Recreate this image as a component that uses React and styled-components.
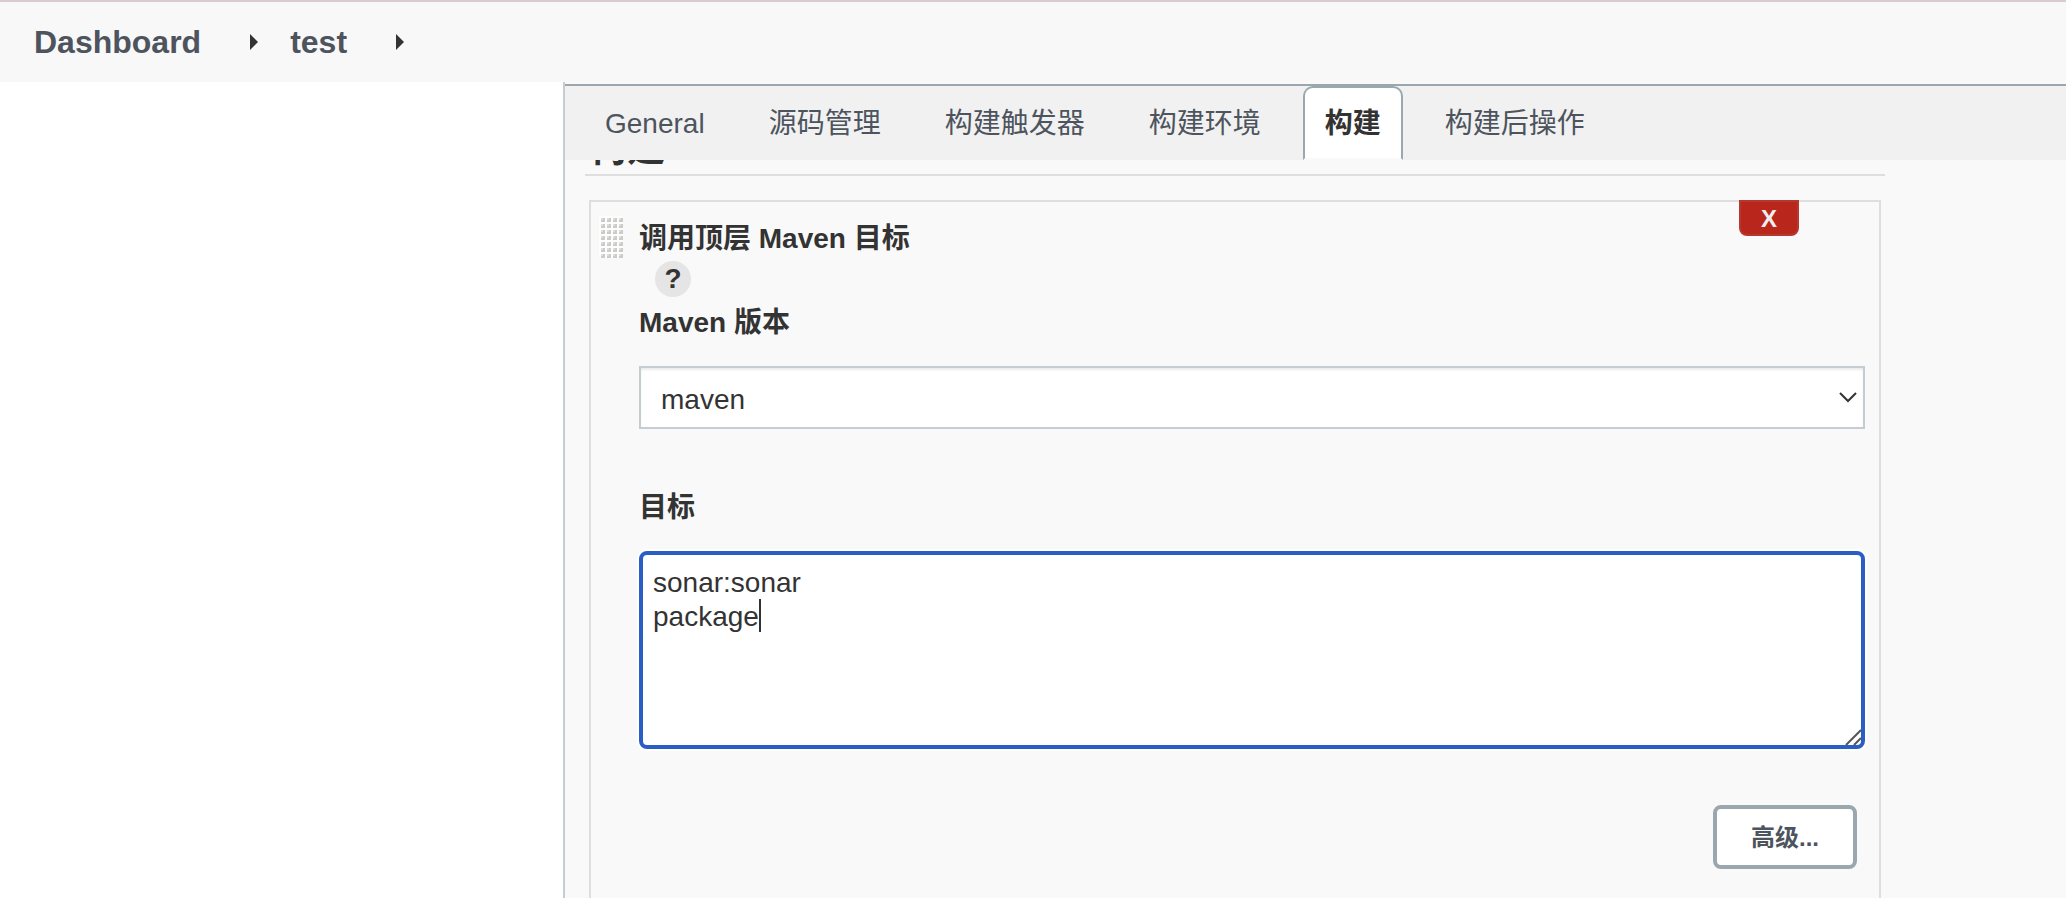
import { useState } from 'react';
import styled, { createGlobalStyle } from 'styled-components';

const GlobalStyle = createGlobalStyle`
    *, *::before, *::after {
        box-sizing: border-box;
    }
    body {
        margin: 0;
        overflow: hidden;
        background: white;
        color: #333;
        font-family: "Liberation Sans", "Noto Sans CJK SC", sans-serif;
        font-size: 28px;
        line-height: 34px;
    }
    button, select, textarea {
        font: inherit;
        color: inherit;
        margin: 0;
    }
`;

const Page = styled.div`
    display: flex;
    flex-direction: column;
    height: 100vh;
`;

const Breadcrumbs = styled.nav`
    display: flex;
    align-items: center;
    flex-shrink: 0;
    height: 82px;
    padding: 0 34px;
    border-top: 2px solid #dacccc;
    background: #f8f8f8;
`;

const Crumb = styled.a`
    color: #4d545d;
    font-size: 32px;
    font-weight: bold;
    text-decoration: none;
`;

const Arrow = styled.svg`
    width: 8px;
    height: 16px;
    margin: 0 32px 0 49px;
    fill: #333;
`;

const Body = styled.div`
    display: flex;
    flex: 1;
    min-height: 0;
`;

const SidePanel = styled.aside`
    flex: 0 0 563px;
`;

const MainPanel = styled.main`
    display: flex;
    flex: 1;
    flex-direction: column;
    border-left: 2px solid #c4cdd1;
    background: #f9f9f9;
`;

const TabBar = styled.div`
    display: flex;
    gap: 20px;
    padding: 0 18px;
    margin-top: 2px;
    border-top: 2px solid #9aa7ae;
    background: #f1f1f1;
`;

const Tab = styled.button`
    height: 74px;
    padding: 2px 20px 0;
    border: 2px solid ${({$active}) => $active ? '#9aa7ae' : 'transparent'};
    border-bottom-color: ${({$active}) => $active ? '#f9f9f9' : 'transparent'};
    border-radius: 10px 10px 0 0;
    background: ${({$active}) => $active ? 'white' : 'transparent'};
    color: ${({$active}) => $active ? '#333' : '#4d545d'};
    font-weight: ${({$active}) => $active ? 'bold' : 'normal'};
    white-space: nowrap;
    cursor: pointer;
`;

const Section = styled.section`
    display: flex;
    flex: 1;
    flex-direction: column;
    min-height: 0;
    margin: 0 181px 0 20px;
    overflow: hidden;
`;

/* scrolled under the tab bar */
const SectionTitle = styled.h2`
    margin: -34px 0 24px;
    padding: 0 4px 4px;
    border-bottom: 2px solid #dedede;
    font-size: 38px;
    line-height: 44px;
`;

const Step = styled.div`
    position: relative;
    display: grid;
    flex: 1;
    grid-template-columns: 48px 1fr;
    margin: 0 4px;
    padding: 20px 14px 0 0;
    border: 2px solid #dedede;
    border-bottom: none;
`;

const DragHandle = styled.svg`
    width: 24px;
    height: 42px;
    margin: -6px 0 0 8px;
    cursor: move;
`;

const DeleteButton = styled.button`
    position: absolute;
    top: -2px;
    right: 80px;
    width: 60px;
    height: 36px;
    padding: 2px 0 0;
    border: 2px solid #b5382f;
    border-radius: 0 0 8px 8px;
    background: #b9261b;
    color: #eee;
    font-size: 24px;
    font-weight: bold;
    line-height: 30px;
    cursor: pointer;
`;

const Fields = styled.div`
    display: flex;
    flex-direction: column;
    align-items: stretch;
`;

const StepName = styled.div`
    font-weight: bold;
`;

const HelpButton = styled.button`
    width: 36px;
    height: 36px;
    margin: 5px 16px 9px;
    padding: 0;
    border: none;
    border-radius: 50%;
    background: #e5e5e5;
    font-weight: bold;
    cursor: pointer;
`;

const Label = styled.label`
    margin-bottom: 26px;
    font-weight: bold;
`;

const SelectBox = styled.div`
    position: relative;
    margin-bottom: 62px;
`;

const Select = styled.select`
    display: block;
    width: 100%;
    height: 63px;
    padding: 4px 20px 0;
    border: 2px solid #c4cdd1;
    border-radius: 0;
    background: white;
    box-shadow: inset 0 2px 2px rgba(0, 0, 0, .08);
    appearance: none;
`;

const Chevron = styled.svg`
    position: absolute;
    top: 24px;
    right: 7px;
    width: 20px;
    height: 14px;
    fill: none;
    stroke: #333;
    stroke-width: 2;
    pointer-events: none;
`;

const TextBox = styled.div`
    position: relative;
    margin-bottom: 56px;
`;

const TextArea = styled.textarea`
    display: block;
    width: 100%;
    height: 198px;
    padding: 11px 10px;
    border: 4px solid #2a5dc6;
    border-radius: 8px;
    outline: none;
    background: white;
    box-shadow: 0 0 0 2px white;
    caret-color: transparent;
    resize: none;
`;

const Caret = styled.span`
    position: absolute;
    top: 48px;
    left: 120px;
    width: 2px;
    height: 33px;
    background: #333;
    pointer-events: none;
`;

const Grip = styled.svg`
    position: absolute;
    right: 4px;
    bottom: 4px;
    width: 16px;
    height: 16px;
    fill: none;
    stroke: #555;
    stroke-width: 2;
    pointer-events: none;
`;

const AdvancedButton = styled.button`
    align-self: flex-end;
    width: 144px;
    height: 64px;
    margin-right: 8px;
    padding: 2px 0 0;
    border: 4px solid #9aa7ae;
    border-radius: 8px;
    background: white;
    color: #4d545d;
    font-size: 24px;
    font-weight: bold;
    cursor: pointer;
`;

const tabs = ['General', '源码管理', '构建触发器', '构建环境', '构建', '构建后操作'];

const BreadcrumbArrow = () => <Arrow viewBox="0 0 8 16" aria-hidden="true">
    <path d="M0 0L8 8L0 16Z"/>
</Arrow>;

const Dots = () => <DragHandle viewBox="0 0 24 42" aria-hidden="true">
    <defs>
        <pattern id="dots" width="6" height="6" patternUnits="userSpaceOnUse">
            <rect width="6" height="6" fill="#fdfdfd"/>
            <rect x="2" y="2" width="4" height="4" fill="#dededc"/>
            <path d="M2 6V4H4V2H6V6Z" fill="#cbcbc8"/>
        </pattern>
    </defs>
    <rect width="24" height="42" fill="url(#dots)"/>
</DragHandle>;

export default function App() {
    const [active, setActive] = useState('构建');
    const [targets, setTargets] = useState('sonar:sonar\npackage');

    return <>
        <GlobalStyle/>
        <Page>
            <Breadcrumbs>
                <Crumb href="#">Dashboard</Crumb>
                <BreadcrumbArrow/>
                <Crumb href="#">test</Crumb>
                <BreadcrumbArrow/>
            </Breadcrumbs>
            <Body>
                <SidePanel/>
                <MainPanel>
                    <TabBar role="tablist">
                        {tabs.map(tab => <Tab
                            key={tab}
                            type="button"
                            role="tab"
                            aria-selected={tab === active}
                            $active={tab === active}
                            onClick={() => setActive(tab)}
                        >{tab}</Tab>)}
                    </TabBar>
                    <Section>
                        <SectionTitle>构建</SectionTitle>
                        <Step>
                            <Dots/>
                            <DeleteButton type="button">X</DeleteButton>
                            <Fields>
                                <StepName>调用顶层 Maven 目标</StepName>
                                <HelpButton type="button">?</HelpButton>
                                <Label htmlFor="maven-version">Maven 版本</Label>
                                <SelectBox>
                                    <Select id="maven-version">
                                        <option>maven</option>
                                    </Select>
                                    <Chevron viewBox="0 0 20 14" aria-hidden="true">
                                        <path d="M2 3L10 11L18 3"/>
                                    </Chevron>
                                </SelectBox>
                                <Label htmlFor="targets">目标</Label>
                                <TextBox>
                                    <TextArea
                                        id="targets"
                                        spellCheck={false}
                                        value={targets}
                                        onChange={e => setTargets(e.target.value)}
                                    />
                                    <Caret/>
                                    <Grip viewBox="0 0 16 16" aria-hidden="true">
                                        <path d="M1 16L16 1M9 16L16 9"/>
                                    </Grip>
                                </TextBox>
                                <AdvancedButton type="button">高级...</AdvancedButton>
                            </Fields>
                        </Step>
                    </Section>
                </MainPanel>
            </Body>
        </Page>
    </>;
}
